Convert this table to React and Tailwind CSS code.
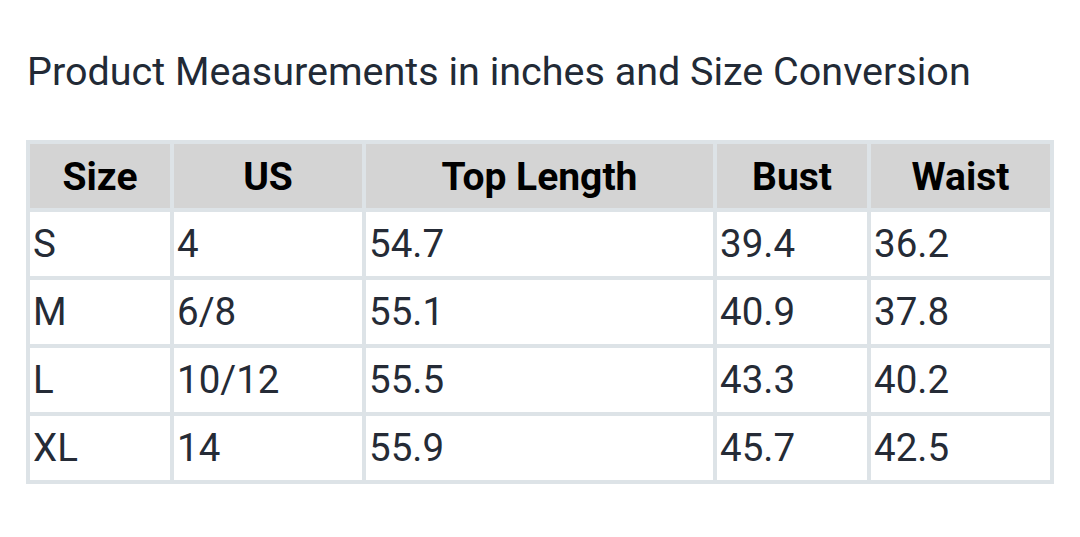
import React from 'react';

const headers = ['Size', 'US', 'Top Length', 'Bust', 'Waist'];

const rows = [
    ['S', '4', '54.7', '39.4', '36.2'],
    ['M', '6/8', '55.1', '40.9', '37.8'],
    ['L', '10/12', '55.5', '43.3', '40.2'],
    ['XL', '14', '55.9', '45.7', '42.5'],
];

const App = () => {
    return (
        <div className="min-h-screen bg-white font-['Roboto',sans-serif] text-[#1f2630]">
            <h1 className="pl-[27px] pt-[50px] text-[39.5px] leading-[44px] font-normal text-[#222a36]">
                Product Measurements in inches and Size Conversion
            </h1>

            {/* size chart */}
            <div className="ml-[26px] mt-[46px] w-[1028px] grid grid-cols-[140px_188px_347px_150px_179px] auto-rows-[64px] gap-[4px] p-[4px] bg-[#dde3e7]">
                {headers.map(h => (
                    <div key={h} className="bg-[#d4d4d4] flex items-center justify-center pt-[2px] text-[39px] font-bold text-black">
                        {h}
                    </div>
                ))}
                {rows.map(row =>
                    row.map((cell, i) => (
                        <div key={row[0] + i} className="bg-white flex items-center pl-[3px] text-[38.5px] text-[#252b36]">
                            {cell}
                        </div>
                    ))
                )}
            </div>
        </div>
    );
};

export default App;
